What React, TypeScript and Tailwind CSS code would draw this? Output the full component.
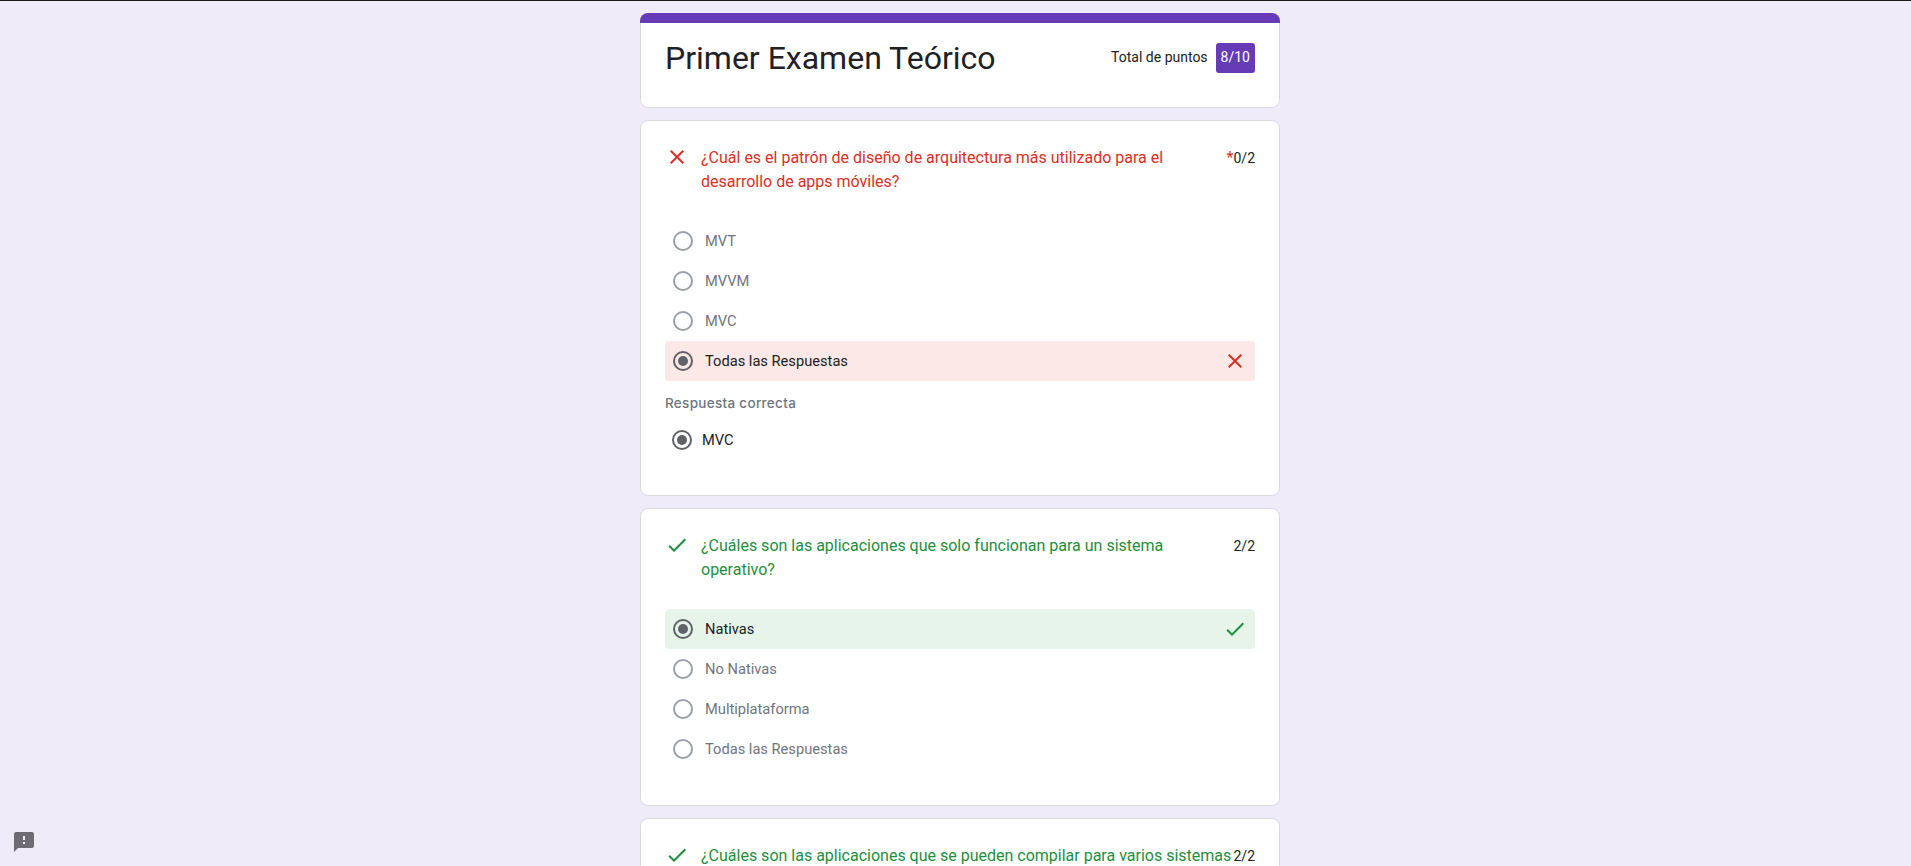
import type { ReactNode } from 'react';

type Result = 'correct' | 'wrong';

interface Option {
  label: string;
  selected?: boolean;
}

interface QuestionProps {
  result: Result;
  title: string;
  score: string;
  required?: boolean;
  options: Option[];
  correctAnswer?: string;
}

function ResultIcon({ result }: { result: Result }) {
  return (
    <svg
      viewBox="0 0 24 24"
      className={`size-6 shrink-0 ${result === 'correct' ? 'fill-[#1e8e3e]' : 'fill-[#d93025]'}`}
    >
      {result === 'correct' ? (
        <path d="M9 16.17L4.83 12l-1.42 1.41L9 19 21 7l-1.41-1.41z" />
      ) : (
        <path d="M19 6.41L17.59 5 12 10.59 6.41 5 5 6.41 10.59 12 5 17.59 6.41 19 12 13.41 17.59 19 19 17.59 13.41 12z" />
      )}
    </svg>
  );
}

function Radio({ selected }: { selected?: boolean }) {
  return (
    <span
      className={`flex size-5 shrink-0 items-center justify-center rounded-full border-2 ${
        selected ? 'border-[#5f6368]' : 'border-[#9aa0a6]'
      }`}
    >
      {selected && <span className="size-2.5 rounded-full bg-[#5f6368]" />}
    </span>
  );
}

function Card({ children }: { children: ReactNode }) {
  return (
    <section className="mt-3 rounded-lg border border-[#dadce0] bg-white px-6">{children}</section>
  );
}

function Question({ result, title, score, required, options, correctAnswer }: QuestionProps) {
  const tone = result === 'correct' ? 'text-[#1e8e3e]' : 'text-[#d93025]';
  const band = result === 'correct' ? 'bg-[#e6f4ea]' : 'bg-[#fce8e6]';
  return (
    <Card>
      <div className="flex items-start pt-6 pb-[27px]">
        <ResultIcon result={result} />
        <h2 className={`mt-px ml-3 w-[532px] shrink-0 text-base leading-6 ${tone}`}>{title}</h2>
        <div className="-ml-6 flex grow justify-end text-base leading-[26px] whitespace-nowrap">
          {required && <span className="text-[#d93025]">*</span>}
          <span className="text-sm leading-[26px] text-[#202124]">{score}</span>
        </div>
      </div>
      <ul>
        {options.map((o) => (
          <li
            key={o.label}
            className={`flex h-10 items-center rounded px-2 text-[14.67px] ${
              o.selected ? `${band} text-[#202124]` : 'text-[#70757a]'
            }`}
          >
            <Radio selected={o.selected} />
            <span className="ml-3 grow">{o.label}</span>
            {o.selected && <ResultIcon result={result} />}
          </li>
        ))}
      </ul>
      {correctAnswer && (
        <>
          <p className="mt-3 font-[Inter,sans-serif] text-[13.5px] leading-5 font-medium tracking-[0.3px] text-[#70757a]">
            Respuesta correcta
          </p>
          <div className="mt-[17px] flex h-5 items-center pl-[7px] text-[14.67px] text-[#202124]">
            <Radio selected />
            <span className="ml-2.5">{correctAnswer}</span>
          </div>
        </>
      )}
      <div className={correctAnswer ? 'h-[45px]' : 'h-9'} />
    </Card>
  );
}

export default function App() {
  return (
    <div className="relative h-[866px] overflow-hidden border-t border-[#1c1a1f] bg-[#f0ebf8] pl-[9px] font-[Roboto,sans-serif]">
      <main className="mx-auto w-[640px] pt-3">
        <header className="overflow-hidden rounded-lg">
          <div className="h-2.5 bg-[#673ab7]" />
          <div className="flex h-[85px] items-start justify-between rounded-b-lg border border-t-0 border-[#dadce0] bg-white px-6">
            <h1 className="mt-[15px] text-[32px] leading-10 text-[#202124]">Primer Examen Teórico</h1>
            <div className="mt-5 flex items-center gap-2 text-sm text-[#202124]">
              <span className="-mt-0.5">Total de puntos</span>
              <span className="flex h-[30px] items-center rounded-[3px] bg-[#673ab7] px-[5px] pb-0.5 text-white">
                8/10
              </span>
            </div>
          </div>
        </header>

        <Question
          result="wrong"
          title="¿Cuál es el patrón de diseño de arquitectura más utilizado para el desarrollo de apps móviles?"
          score="0/2"
          required
          options={[
            { label: 'MVT' },
            { label: 'MVVM' },
            { label: 'MVC' },
            { label: 'Todas las Respuestas', selected: true },
          ]}
          correctAnswer="MVC"
        />
        <Question
          result="correct"
          title="¿Cuáles son las aplicaciones que solo funcionan para un sistema operativo?"
          score="2/2"
          options={[
            { label: 'Nativas', selected: true },
            { label: 'No Nativas' },
            { label: 'Multiplataforma' },
            { label: 'Todas las Respuestas' },
          ]}
        />
        <Question
          result="correct"
          title="¿Cuáles son las aplicaciones que se pueden compilar para varios sistemas"
          score="2/2"
          options={[]}
        />
      </main>

      <svg viewBox="0 0 24 24" className="absolute bottom-3 left-3 size-6 fill-[#6f6b75]">
        <path d="M20 2H4c-1.1 0-1.99.9-1.99 2L2 22l4-4h14c1.1 0 2-.9 2-2V4c0-1.1-.9-2-2-2zm-7 12h-2v-2h2v2zm0-4h-2V6h2v4z" />
      </svg>
    </div>
  );
}
